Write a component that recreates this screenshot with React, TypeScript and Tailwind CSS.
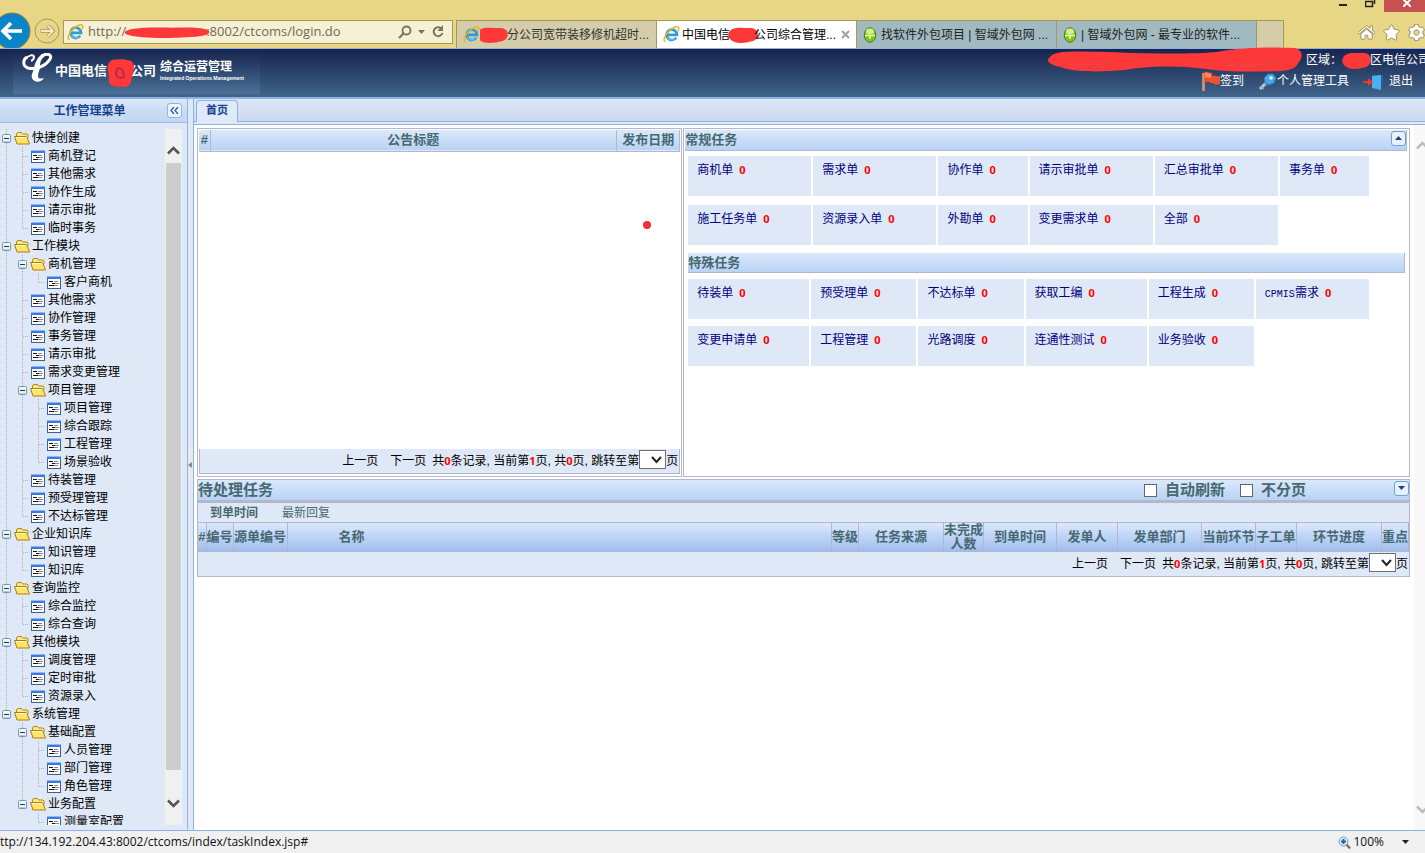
import React from "react";
import { FaHome, FaStar, FaCog } from "react-icons/fa";

type Node = { label: string; children?: Node[] };

const leaves = (...labels: string[]): Node[] => labels.map((label) => ({ label }));

const menu: Node[] = [
  { label: "快捷创建", children: leaves("商机登记", "其他需求", "协作生成", "请示审批", "临时事务") },
  {
    label: "工作模块",
    children: [
      { label: "商机管理", children: leaves("客户商机") },
      ...leaves("其他需求", "协作管理", "事务管理", "请示审批", "需求变更管理"),
      { label: "项目管理", children: leaves("项目管理", "综合跟踪", "工程管理", "场景验收") },
      ...leaves("待装管理", "预受理管理", "不达标管理"),
    ],
  },
  { label: "企业知识库", children: leaves("知识管理", "知识库") },
  { label: "查询监控", children: leaves("综合监控", "综合查询") },
  { label: "其他模块", children: leaves("调度管理", "定时审批", "资源录入") },
  {
    label: "系统管理",
    children: [
      { label: "基础配置", children: leaves("人员管理", "部门管理", "角色管理") },
      { label: "业务配置", children: leaves("测量室配置") },
    ],
  },
];

const regularTasks = ["商机单", "需求单", "协作单", "请示审批单", "汇总审批单", "事务单", "施工任务单", "资源录入单", "外勘单", "变更需求单", "全部"];
const specialTasks = ["待装单", "预受理单", "不达标单", "获取工编", "工程生成", "CPMIS需求", "变更申请单", "工程管理", "光路调度", "连通性测试", "业务验收"];

const Dots = ({ d }: { d: string }) => (
  <path d={d} stroke="#a9aeb8" strokeWidth="1" strokeDasharray="1 1" fill="none" />
);

const FolderIcon = () => (
  <svg width="16" height="18" viewBox="0 0 16 18" className="shrink-0">
    <path d="M2.500 14V5L3.500 3.500h4l1 1.500h4.500l1 1V9" fill="#fbe98c" stroke="#b8860b" />
    <path d="M.500 7.500h11.500l1 1 2.500 6.500H3z" fill="#ffe46a" stroke="#b07d12" />
    <path d="M2 8.500h9.500" stroke="#fffbd0" />
  </svg>
);

const FormIcon = () => (
  <svg width="16" height="18" viewBox="0 0 16 18" className="shrink-0">
    <rect x="1.500" y="3.500" width="13" height="12" fill="#fff" stroke="#3f5f8f" />
    <rect x="1" y="3" width="14" height="3" fill="#3b78e7" />
    <path d="M1 3.500h14" stroke="#8fb6f7" />
    <path d="M3 8.500h4M3 12.500h5M6 10.500h3" stroke="#111" />
    <path d="M8 8.500h4M9 10.500h4M8 12.500h4" stroke="#888" />
  </svg>
);

function TreeCell({ last, open }: { last: boolean; open: boolean }) {
  return (
    <svg width="14" height="18" viewBox="0 0 14 18" className="shrink-0">
      <Dots d={last ? "M6.500 0V9" : "M6.500 0V18"} />
      {!open && <Dots d="M7 9.500H13" />}
      {open && (
        <>
          <rect x="2.500" y="5.500" width="8" height="8" rx="1" fill="#eef3fa" stroke="#7b96b8" />
          <path d="M3 12.500h7" stroke="#bccbe0" />
          <path d="M4 9.500h5" stroke="#22304a" />
        </>
      )}
    </svg>
  );
}

function Tree({ nodes, trail = [] }: { nodes: Node[]; trail?: boolean[] }) {
  return (
    <ul>
      {nodes.map((n, i) => {
        const last = i === nodes.length - 1;
        return (
          <li key={i}>
            <a href="#" className="flex h-[18px] items-center whitespace-nowrap text-xs leading-[18px] text-black">
              {trail.map((line, k) => (
                <svg key={k} width="16" height="18" viewBox="0 0 16 18" className="shrink-0">
                  {line && <Dots d="M6.500 0V18" />}
                </svg>
              ))}
              <TreeCell last={last} open={!!n.children} />
              {n.children ? <FolderIcon /> : <FormIcon />}
              <span className="pl-0.5">{n.label}</span>
            </a>
            {n.children && <Tree nodes={n.children} trail={[...trail, !last]} />}
          </li>
        );
      })}
    </ul>
  );
}

const IeIcon = () => (
  <svg width="17" height="17" viewBox="0 0 17 17" className="shrink-0">
    <path d="M13.200 11.600A5.200 5.200 0 1 1 14 8.900H4.600" fill="none" stroke="#2f9bd8" strokeWidth="2.700" />
    <path d="M12.600 11.600A4.800 4.800 0 0 1 4 11" fill="none" stroke="#7cc8f0" strokeWidth="1" />
    <path d="M2.600 15.600C-.600 15.400 1.600 9 6.600 4.600 10.600 1 15.400-.400 15.800 2.200c.100.900-.200 1.800-.800 2.800" fill="none" stroke="#f0b41c" strokeWidth="1.500" />
  </svg>
);

const GreenIcon = () => (
  <svg width="14" height="16" viewBox="0 0 14 16" className="shrink-0">
    <ellipse cx="7" cy="8" rx="5.800" ry="7.200" fill="#7cc810" stroke="#4d7a18" />
    <ellipse cx="7" cy="4.500" rx="4" ry="3" fill="#d4f08a" />
    <path d="M2 8.500h10M7 8.500V12" stroke="#eefbd0" strokeWidth="1.500" />
  </svg>
);

const Blob = ({ w, h }: { w: number; h: number }) => (
  <svg width={w} height={h} viewBox="0 0 30 16" preserveAspectRatio="none" className="shrink-0">
    <path d="M3 3C8 0 12 1 17 1s9-1 12 3c2 4 0 9-4 10-5 1-8 2-12 2S4 15 1 11C-.500 8 .500 5 3 3z" fill="#fd3838" />
  </svg>
);

const Chevron = ({ up, color }: { up?: boolean; color: string }) => (
  <svg width="13" height="9" viewBox="0 0 13 9" className="shrink-0">
    <path d={up ? "M1 7.500 6.500 2 12 7.500" : "M1 1.500 6.500 7 12 1.500"} fill="none" stroke={color} strokeWidth="2.600" />
  </svg>
);

function PanelToggle({ up, label }: { up?: boolean; label: string }) {
  return (
    <button aria-label={label} className="flex size-[15px] shrink-0 items-center justify-center rounded-[3px] border border-[#6f9fdc] bg-[#e8f2fe]">
      <svg width="7" height="4" viewBox="0 0 7 4">
        <path d={up ? "M0 4 3.500 0 7 4z" : "M0 0h7L3.500 4z"} fill="#1c3f94" />
      </svg>
    </button>
  );
}

const Red = ({ children }: { children: React.ReactNode }) => (
  <b className="font-['Noto_Sans',sans-serif] text-[11px] text-[#ff0000]">{children}</b>
);

function Pager({ id }: { id: string }) {
  return (
    <div className="flex h-6 items-center justify-end whitespace-nowrap bg-[#dfe8f6] pr-px text-xs text-black">
      <a href="#" className="mr-3 text-black">上一页</a>
      <a href="#" className="mr-1.5 text-black">下一页</a>
      <label htmlFor={id}>
        共<Red>0</Red>条记录, 当前第<Red>1</Red>页, 共<Red>0</Red>页, 跳转至第
      </label>
      <span className="relative mb-1 flex">
        <select id={id} className="h-[19px] w-[27px] appearance-none border border-[#707070] bg-white">
          <option></option>
        </select>
        <span className="pointer-events-none absolute right-1 top-1.5">
          <svg width="11" height="8" viewBox="0 0 11 8"><path d="M1 1 5.500 6 10 1" fill="none" stroke="#222" strokeWidth="2" /></svg>
        </span>
      </span>
      页
    </div>
  );
}

function TaskCard({ label }: { label: string }) {
  const latin = label.startsWith("CPMIS");
  return (
    <a href="#" className="flex h-10 items-start whitespace-nowrap bg-[#dfe8f6] pl-[9px] pt-1.5 text-xs leading-4 text-[#000080]">
      {latin ? <span><span className="font-['Liberation_Mono',monospace] text-[10px]">CPMIS</span>{label.slice(5)}</span> : label}
      <span className="pl-1.5"><Red>0</Red></span>
    </a>
  );
}

function BrowserTab({ icon, active, tone, children }: { icon: React.ReactNode; active?: boolean; tone: string; children: React.ReactNode }) {
  return (
    <button className={`flex h-7 w-[200px] min-w-0 items-center border-l border-t border-[#a8965a] pl-1.5 text-xs ${tone}`}>
      {icon}
      <span className="flex flex-1 items-center overflow-hidden whitespace-nowrap">{children}</span>
      {active && (
        <svg width="9" height="9" viewBox="0 0 9 9" className="mr-1.5 shrink-0"><path d="m1 1 7 7M8 1 1 8" stroke="#a0a0a0" strokeWidth="2" /></svg>
      )}
    </button>
  );
}

function BrowserChrome() {
  return (
    <div className="relative h-12 shrink-0 overflow-hidden bg-[#e8d687]">
      <div className="absolute right-0 top-0 flex h-3 items-start">
        <button aria-label="最小化" className="w-[26px]"><svg width="8" height="8" viewBox="0 0 8 8" className="block"><path d="M0 5h8" stroke="#222" strokeWidth="2" /></svg></button>
        <button aria-label="还原" className="w-[19px]"><svg width="11" height="8" viewBox="0 0 11 8" className="block"><path d="M.500 1.500h7v5h-7zM9.500 0v4" fill="none" stroke="#222" strokeWidth="1.500" /></svg></button>
        <button aria-label="关闭" className="flex h-3 w-[41px] justify-center bg-[#c75050] pl-1"><svg width="8" height="7" viewBox="0 0 8 7"><path d="M0-1 8 7M8-1 0 7" stroke="#fff" strokeWidth="2" /></svg></button>
      </div>
      <div className="flex pt-5">
        <div className="-mt-2 flex w-[63px] shrink-0 items-center">
          <button aria-label="后退" className="-ml-[6px]">
            <svg width="37" height="37" viewBox="0 0 37 37" className="block">
              <circle cx="18" cy="19" r="18" fill="#0a85c7" stroke="#8a7b45" strokeWidth="1" />
              <path d="M28 19H9M17 11l-8 8 8 8" fill="none" stroke="#fff" strokeWidth="3.600" />
            </svg>
          </button>
          <button aria-label="前进" className="ml-[3px]">
            <svg width="26" height="26" viewBox="0 0 26 26" className="block">
              <circle cx="13" cy="13" r="12" fill="none" stroke="#a8965a" />
              <path d="M6.500 13H18M13.500 7.500 19 13l-5.500 5.500" fill="none" stroke="#a8965a" strokeWidth="3.600" />
              <path d="M7 13h11M13.500 7.500 19 13l-5.500 5.500" fill="none" stroke="#f4ecc4" strokeWidth="1.800" />
            </svg>
          </button>
        </div>
        <div className="flex h-6 w-[390px] shrink-0 items-center border border-[#a8965a] bg-[#f7f0d3] px-[3px] font-['Open_Sans','Noto_Sans',sans-serif] text-[13px] text-[#6f6a5c]">
          <IeIcon />
          <span className="flex flex-1 items-center whitespace-nowrap pl-1">
            http://<span className="-ml-0.5 -mr-1 flex"><Blob w={86} h={11} /></span>:8002/ctcoms/login.do
          </span>
          <svg width="14" height="14" viewBox="0 0 14 14"><circle cx="8.500" cy="5.500" r="4" fill="none" stroke="#7a735c" strokeWidth="1.800" /><path d="M5.500 8.500 1 13" stroke="#7a735c" strokeWidth="2.200" /></svg>
          <svg width="7" height="4" viewBox="0 0 7 4" className="mx-1.5"><path d="M0 0h7L3.500 4z" fill="#7a735c" /></svg>
          <svg width="14" height="14" viewBox="0 0 14 14" className="mr-1"><path d="M11 4.200A4.500 4.500 0 1 0 11.500 8" fill="none" stroke="#7a735c" strokeWidth="2" /><path d="M12 0v6H6.500z" fill="#7a735c" /></svg>
        </div>
        <div className="ml-[3px] flex min-w-0 flex-1">
          <BrowserTab icon={<IeIcon />} tone="bg-[#d5cdaa] text-[#333]">
            <span className="-ml-1 flex"><Blob w={32} h={16} /></span><span className="-ml-px">分公司宽带装移修机超时...</span>
          </BrowserTab>
          <BrowserTab icon={<IeIcon />} active tone="bg-white text-black">
            <span className="pl-0.5">中国电信</span><span className="-ml-0.5 flex"><Blob w={30} h={16} /></span><span className="-ml-1">公司综合管理...</span>
          </BrowserTab>
          <BrowserTab icon={<GreenIcon />} tone="bg-[#a1bac2] text-[#222]"><span className="pl-1">找软件外包项目 | 智域外包网 ...</span></BrowserTab>
          <BrowserTab icon={<GreenIcon />} tone="bg-[#a1bac2] text-[#222]"><span className="pl-1">| 智域外包网 - 最专业的软件...</span></BrowserTab>
          <button aria-label="新建选项卡" className="h-7 w-7 shrink-0 border-x border-t border-[#a8965a] bg-[#d5cdaa]" />
        </div>
        <div className="flex h-6 shrink-0 items-center gap-2 text-white">
          <button aria-label="主页"><FaHome size={17} stroke="#94865a" strokeWidth={30} /></button>
          <button aria-label="收藏夹"><FaStar size={17} stroke="#94865a" strokeWidth={30} /></button>
          <button aria-label="工具"><FaCog size={17} stroke="#94865a" strokeWidth={30} /></button>
        </div>
      </div>
    </div>
  );
}

function SiteHeader() {
  return (
    <header className="flex h-[51px] shrink-0 justify-between border-b-2 border-t border-[#8db2e3] bg-linear-to-b from-[#17244f] to-[#41658a] text-xs text-white">
      <div className="ml-[13px] flex h-[45px] w-[247px] shrink-0 whitespace-nowrap bg-linear-to-b from-[#17244f] to-[#4a7297] pl-2 pt-1">
        <svg width="34" height="30" viewBox="0 0 34 30" className="shrink-0">
          <path d="M6 4C2 6 1 13 7 15c8 2 18-2 22-9 3-5-4-6-8-3" stroke="#fff" strokeWidth="3" fill="none" />
          <path d="M5 6c2-4 8-5 8-2 0 2-1 3-3 4" stroke="#fff" strokeWidth="2" fill="none" />
          <path d="M21 1c-5 4-7 9-8 14-1 4-3 7-2 10 2 5 9 5 12 0-3 1-6 1-6-2 0-4 2-6 2-9 0-5 1-8 5-11z" fill="#fff" />
        </svg>
        <div className="flex pt-[6px] text-[13px] font-bold">
          <span className="leading-6">中国电信</span>
          <span className="z-10 flex">
            <svg width="27" height="28" viewBox="0 0 27 28" className="shrink-0">
              <path d="M5 1c6-1 14-1 19 1 4 3 3 8 2 13-2 4-1 10-5 12-5 2-14 1-17-1-4-3-1-9-3-13C0 8 1 3 5 1z" fill="#fd3838" />
              <path d="M10 10c3-2 6 0 6 3 0 2 2 4 1 5-4 2-8 0-8-3z" fill="none" stroke="#a82844" strokeWidth="1.500" />
            </svg>
          </span>
          <span className="-ml-1 leading-6">公司</span>
        </div>
        <div className="pl-1 pt-1.5 leading-4">
          <div className="text-xs font-bold">综合运营管理</div>
          <div className="font-['Liberation_Sans',sans-serif] text-[5px] font-bold leading-[6px]">Integrated Operations Management</div>
        </div>
      </div>
      <div className="flex flex-col items-end">
        <div className="-mr-[5px] flex h-[22px] items-center whitespace-nowrap">
          <svg width="256" height="26" viewBox="0 0 256 26" preserveAspectRatio="none" className="z-10 shrink-0">
            <path d="M3 10C8 4 20 4 60 5c50 2 85 2 110 0C195 0 225 0 248 1c8 2 8 9 4 14-4 7-8 8-18 9-30 1-55 1-75-2-30-4-60-3-82 1-20 2-45 2-57-1C8 19-4 16 3 10z" fill="#fd3838" />
            <path d="M20 17c15 1 30 1 45-1M182 18c15 1 30 0 50-3" stroke="#e04a55" fill="none" />
          </svg>
          <span className="pl-[3px]">区域：</span><Blob w={29} h={17} /><span className="-ml-px">区电信公司</span>
        </div>
        <nav className="flex items-center whitespace-nowrap pr-3 leading-5">
          <a href="#" className="mr-3.5 flex text-white">
            <svg width="18" height="20" viewBox="0 0 18 20"><path d="M1.500 2v18" stroke="#d9a066" strokeWidth="2.500" /><path d="M2 1c4-1 5 1 8 1v3c3-1 4 1 8 0v8c-4 2-6-1-9-1-3-2-4-1-7-1z" fill="#f0502c" /><path d="M3 2c3-1 4 1 6 1v4c-3 0-3-1-6 0z" fill="#f98a66" /></svg>
            签到
          </a>
          <a href="#" className="mr-3.5 flex text-white">
            <svg width="19" height="20" viewBox="0 0 19 20"><path d="m10 10-8 8" stroke="#c4ccd6" strokeWidth="3" /><path d="m3 15 3 3M6 13l2 2" stroke="#9aa6b4" strokeWidth="1.500" /><path d="m6 7 4-4h5l3 4-2 5-5 2-4-2z" fill="#4aa8e8" stroke="#2577ba" /><circle cx="13" cy="7" r="1.800" fill="#dff2ff" /></svg>
            个人管理工具
          </a>
          <a href="#" className="flex text-white">
            <svg width="20" height="20" viewBox="0 0 20 20" className="mr-1.5"><path d="M9 4h11v13H9z" fill="#2b5e9a" /><path d="m9 5 9-1v15l-9-2z" fill="#4ab0f0" /><path d="M0 10h5V7l5 4-5 4v-3H0z" fill="#ee3a24" /></svg>
            退出
          </a>
        </nav>
      </div>
    </header>
  );
}

const th = "border-r border-[#b3b7cc] p-0 text-[13px] leading-[14px] font-bold";

export default function App() {
  return (
    <div className="flex h-screen flex-col overflow-hidden bg-white font-['Liberation_Sans','Noto_Sans_CJK_SC',sans-serif]">
      <BrowserChrome />
      <SiteHeader />
      <div className="flex min-h-0 flex-1 border-b border-[#8db2e3] bg-[#dfe8f6]">
        <aside className="flex w-[188px] shrink-0 flex-col border-r border-[#8db2e3]">
          <div className="flex h-6 shrink-0 items-center border-b border-[#99bbe8] bg-linear-to-b from-[#dce8f6] via-[#cbdcf3] to-[#c4d8f2] pr-[5px]">
            <h2 className="flex-1 pl-3 text-center text-xs font-bold leading-5 text-[#15428b]">工作管理菜单</h2>
            <button aria-label="收起菜单" className="flex size-[15px] items-center justify-center rounded-[3px] border border-[#8fb4e8] bg-[#eaf3fe]">
              <svg width="9" height="7" viewBox="0 0 9 7"><path d="M4 0 1 3.500 4 7M8 0 5 3.500 8 7" fill="none" stroke="#2c5aa8" strokeWidth="1.300" /></svg>
            </button>
          </div>
          <div className="mb-[5px] mr-[5px] mt-1.5 flex min-h-0 flex-1">
            <nav className="min-w-0 flex-1 overflow-hidden"><Tree nodes={menu} /></nav>
            <div className="flex w-[17px] shrink-0 flex-col items-center bg-[#f0f0f0]">
              <div className="flex h-[34px] shrink-0 items-center pt-2"><Chevron up color="#555" /></div>
              <div className="w-[15px] flex-1 bg-[#cdcdcd]" />
              <div className="flex h-[55px] shrink-0 items-center pt-3"><Chevron color="#555" /></div>
            </div>
          </div>
        </aside>
        <div className="flex w-[5px] shrink-0 items-center">
          <button aria-label="收起" className="flex h-[35px] w-[5px] items-center bg-[#e8eaee]">
            <svg width="4" height="6" viewBox="0 0 4 6"><path d="M4 0v6L0 3z" fill="#888" /></svg>
          </button>
        </div>
        <main className="flex min-w-0 flex-1 flex-col border-l border-[#8db2e3] bg-white">
          <div className="flex h-[26px] shrink-0 flex-col border-b border-[#8db2e3] bg-[#dfe8f6]">
            <div className="flex h-[23px] items-end border-b border-[#8db2e3] bg-linear-to-b from-[#dce6f5] to-[#cad9ee] pl-0.5">
              <button className="-mb-px h-[22px] w-[42px] rounded-t border border-b-0 border-[#8db2e3] bg-[#dfeafb] pb-1 text-[11px] font-bold leading-4 text-[#15428b]">首页</button>
            </div>
          </div>
          <div className="flex min-h-0 flex-1">
            <div className="min-w-0 flex-1 py-[3px] pl-[3px] pr-1 text-[#466870]">
              <div className="flex h-[349px] gap-px">
                <section className="relative flex w-[40%] flex-col border border-[#b3b7cc] p-px">
                  <table className="w-full table-fixed border-collapse">
                    <colgroup><col className="w-[11px]" /><col /><col className="w-[63px]" /></colgroup>
                    <thead>
                      <tr className="h-[21px] border-b border-[#b3b7cc] bg-linear-to-b from-[#dbe9fc] to-[#b9d2f3]">
                        <th className={th}>#</th><th className={th}>公告标题</th><th className={th}>发布日期</th>
                      </tr>
                    </thead>
                  </table>
                  <svg width="8" height="8" viewBox="0 0 8 8" className="absolute left-[445px] top-[92px]"><circle cx="4" cy="4" r="4" fill="#f23030" /></svg>
                  <div className="mb-px mt-auto border-x border-b border-[#b3b7cc]"><Pager id="notice-page" /></div>
                </section>
                <section className="flex-1 border border-[#b3b7cc] pt-px">
                  <div className="ml-px mr-0.5 flex h-[21px] items-center justify-between border-b border-r border-[#b3b7cc] bg-linear-to-b from-[#dbe9fc] to-[#b9d2f3]">
                    <h3 className="text-[13px] font-bold">常规任务</h3><div className="mb-1 flex"><PanelToggle up label="收起常规任务" /></div>
                  </div>
                  <div className="grid grid-cols-[123fr_123fr_89fr_123fr_123fr_89fr] gap-x-0.5 gap-y-[9px] pl-1 pr-10 pt-[5px]">
                    {regularTasks.map((t) => <TaskCard key={t} label={t} />)}
                  </div>
                  <div className="ml-1 mr-1 mt-2 flex h-5 items-center border-b border-r border-[#b3b7cc] bg-linear-to-b from-[#dbe9fc] to-[#b9d2f3]">
                    <h3 className="text-[13px] font-bold">特殊任务</h3>
                  </div>
                  <div className="grid grid-cols-[121fr_105fr_105fr_121fr_105fr_113fr] gap-x-0.5 gap-y-[7px] pl-1 pr-10 pt-1.5">
                    {specialTasks.map((t) => <TaskCard key={t} label={t} />)}
                  </div>
                </section>
              </div>
              <section className="mt-0.5 border border-[#b3b7cc]">
                <div className="flex h-[23px] items-center border-b-[3px] border-[#b3b7cc] bg-linear-to-b from-[#dbe9fc] to-[#b9d2f3] text-[15px] font-bold">
                  <h3 className="flex-1">待处理任务</h3>
                  <label className="mr-[15px] flex items-center gap-2"><input type="checkbox" className="size-[13px] appearance-none border border-[#666] bg-white" />自动刷新</label>
                  <label className="mr-[88px] flex items-center gap-2"><input type="checkbox" className="size-[13px] appearance-none border border-[#666] bg-white" />不分页</label>
                  <div className="mb-1 flex"><PanelToggle label="展开待处理任务" /></div>
                </div>
                <div className="flex h-[19px] items-center gap-6 bg-[#dfe8f6] pl-3 text-xs">
                  <button className="font-bold">到单时间</button>
                  <button>最新回复</button>
                </div>
                <table className="w-full table-fixed border-collapse border-y border-[#b3b7cc]">
                  <colgroup>
                    <col className="w-2" /><col className="w-[27px]" /><col className="w-[54px]" /><col /><col className="w-[27px]" /><col className="w-[85px]" /><col className="w-[40px]" /><col className="w-[73px]" /><col className="w-[61px]" /><col className="w-[84px]" /><col className="w-[54px]" /><col className="w-[41px]" /><col className="w-[85px]" /><col className="w-[27px]" />
                  </colgroup>
                  <thead>
                    <tr className="h-7 whitespace-nowrap bg-linear-to-b from-[#dbe9fc] to-[#9dbdee]">
                      <th className={th}>#</th><th className={th}>编号</th><th className={th}>源单编号</th>
                      <th className={`${th} text-left`}><span className="pl-[51px]">名称</span></th>
                      <th className={th}>等级</th><th className={th}>任务来源</th><th className={th}>未完成<br />人数</th>
                      <th className={th}>到单时间</th><th className={th}>发单人</th><th className={th}>发单部门</th><th className={th}>当前环节</th><th className={th}>子工单</th><th className={th}>环节进度</th><th className={th}>重点</th>
                    </tr>
                  </thead>
                </table>
                <Pager id="task-page" />
              </section>
            </div>
            <div className="flex w-[11px] shrink-0 flex-col justify-between overflow-hidden bg-[#f8f8f8] pb-4 pl-0.5 pt-4">
              <Chevron up color="#bdbdbd" /><Chevron color="#bdbdbd" />
            </div>
          </div>
        </main>
      </div>
      <footer className="flex h-[22px] shrink-0 items-center justify-between bg-[#f0f0f0] font-['Open_Sans','Noto_Sans',sans-serif] text-xs text-[#111]">
        <span>ttp://134.192.204.43:8002/ctcoms/index/taskIndex.jsp#</span>
        <button className="flex items-center pr-4">
          <svg width="13" height="13" viewBox="0 0 13 13" className="mr-0.5"><path d="m8 8 4 4.500" stroke="#8b5a2b" strokeWidth="2" /><circle cx="5.500" cy="5.500" r="4.500" fill="#dbeafa" stroke="#7d97b5" /><path d="M5.500 3v5M3 5.500h5" stroke="#1565c0" strokeWidth="2" /></svg>
          100%
          <svg width="7" height="4" viewBox="0 0 7 4" className="ml-[18px]"><path d="M0 0h7L3.500 4z" fill="#222" /></svg>
        </button>
      </footer>
    </div>
  );
}
